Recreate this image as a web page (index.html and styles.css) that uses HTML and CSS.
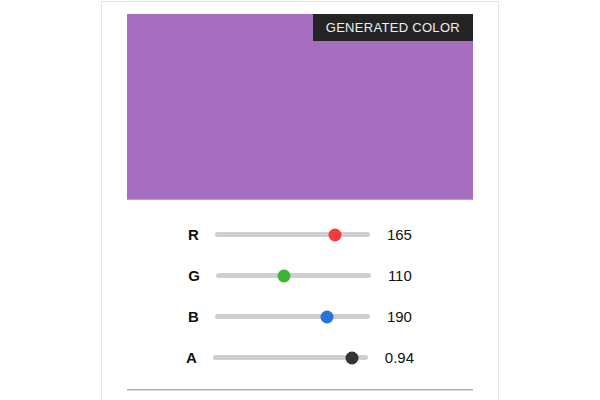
FILE: index.html
```html
<!DOCTYPE html>
<html>
<head>
<meta charset="utf-8">
<link rel="stylesheet" href="styles.css">
</head>
<body>
<div class="card">
  <div class="swatch">
    <span class="badge">GENERATED COLOR</span>
  </div>
  <div class="sliders">
    <div class="row">
      <span class="label">R</span>
      <div class="track"><span class="thumb red" style="left: 77.4%"></span></div>
      <span class="value">165</span>
    </div>
    <div class="row">
      <span class="label">G</span>
      <div class="track"><span class="thumb green" style="left: 43.9%"></span></div>
      <span class="value">110</span>
    </div>
    <div class="row">
      <span class="label">B</span>
      <div class="track"><span class="thumb blue" style="left: 72.3%"></span></div>
      <span class="value">190</span>
    </div>
    <div class="row">
      <span class="label">A</span>
      <div class="track"><span class="thumb dark" style="left: 89.7%"></span></div>
      <span class="value">0.94</span>
    </div>
  </div>
  <div class="divider"></div>
</div>
</body>
</html>
```

FILE: styles.css
```css
* { box-sizing: border-box; }
html, body {
  margin: 0;
  padding: 0;
  background: #ffffff;
  font-family: "Liberation Sans", Arial, sans-serif;
  color: #111;
}
.card {
  width: 398px;
  margin: 1px auto 0;
  border: 1px solid #e6e6e6;
  padding: 12px 25px 20px;
}
.swatch {
  position: relative;
  height: 186px;
  background: #a56ebf;
  border-bottom: 1px solid #c49bd6;
}
.badge {
  position: absolute;
  top: 0;
  right: 0;
  height: 27px;
  line-height: 27px;
  padding: 0 13px;
  background: #242424;
  color: #f0f0f0;
  font-size: 13px;
  letter-spacing: 0.3px;
}
.sliders {
  margin-top: 14px;
  display: flex;
  flex-direction: column;
}
.row {
  height: 41px;
  display: flex;
  align-items: center;
  justify-content: center;
}
.label {
  font-weight: bold;
  font-size: 15px;
  margin-right: 16px;
}
.track {
  position: relative;
  width: 155px;
  height: 5px;
  border-radius: 3px;
  background: #cfcfcf;
}
.thumb {
  position: absolute;
  top: 50%;
  width: 13px;
  height: 13px;
  border-radius: 50%;
  transform: translate(-50%, -50%);
}
.red { background: #f33b3b; }
.green { background: #3db332; }
.blue { background: #2a74d8; }
.dark { background: #333333; }
.value {
  font-size: 15px;
  margin-left: 17px;
}
.divider {
  margin-top: 11px;
  border-top: 1px solid #aaaaaa;
  border-bottom: 1px solid #dddddd;
}
```
